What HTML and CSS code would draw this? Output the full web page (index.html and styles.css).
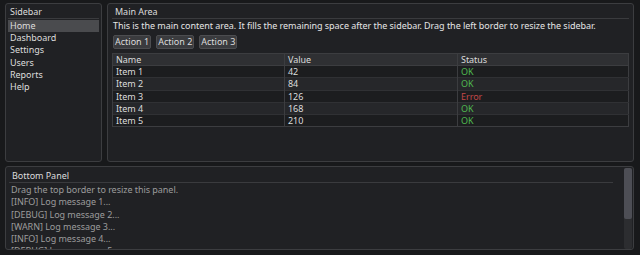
FILE: index.html
```html
<!DOCTYPE html>
<html>
<head>
<meta charset="utf-8">
<link rel="stylesheet" href="styles.css">
</head>
<body>
<div class="app">
  <div class="top">
    <aside class="panel sidebar">
      <div class="title">Sidebar</div>
      <ul class="nav">
        <li class="active">Home</li>
        <li>Dashboard</li>
        <li>Settings</li>
        <li>Users</li>
        <li>Reports</li>
        <li>Help</li>
      </ul>
    </aside>
    <main class="panel main">
      <div class="title">Main Area</div>
      <p class="desc">This is the main content area. It fills the remaining space after the sidebar. Drag the left border to resize the sidebar.</p>
      <div class="actions">
        <button>Action 1</button>
        <button>Action 2</button>
        <button>Action 3</button>
      </div>
      <table class="grid">
        <thead>
          <tr><th>Name</th><th>Value</th><th>Status</th></tr>
        </thead>
        <tbody>
          <tr><td>Item 1</td><td>42</td><td class="ok">OK</td></tr>
          <tr><td>Item 2</td><td>84</td><td class="ok">OK</td></tr>
          <tr><td>Item 3</td><td>126</td><td class="err">Error</td></tr>
          <tr><td>Item 4</td><td>168</td><td class="ok">OK</td></tr>
          <tr><td>Item 5</td><td>210</td><td class="ok">OK</td></tr>
        </tbody>
      </table>
    </main>
  </div>
  <section class="panel bottom">
    <div class="bottom-body">
      <div class="title">Bottom Panel</div>
      <div class="log">
        <div>Drag the top border to resize this panel.</div>
        <div>[INFO] Log message 1...</div>
        <div>[DEBUG] Log message 2...</div>
        <div>[WARN] Log message 3...</div>
        <div>[INFO] Log message 4...</div>
        <div>[DEBUG] Log message 5...</div>
      </div>
    </div>
    <div class="scrollbar"><div class="thumb"></div></div>
  </section>
</div>
</body>
</html>
```
FILE: styles.css
```css
* { box-sizing: border-box; }
html, body {
  margin: 0;
  padding: 0;
  background: #18191b;
  width: 640px;
  height: 255px;
  overflow: hidden;
}
body {
  font-family: "Noto Sans", "Open Sans", sans-serif;
  font-size: 9px;
  letter-spacing: -0.04px;
  color: #dcdcdc;
  line-height: 12px;
}
.app {
  display: flex;
  flex-direction: column;
  gap: 4px;
  padding: 3px 6px 5px 5px;
  height: 255px;
}
.top {
  display: flex;
  gap: 5px;
  height: 159px;
}
.panel {
  background: #202124;
  border: 1px solid #3c3d40;
  border-radius: 3px;
}
.title {
  padding: 1px 3px 0 3px;
  height: 15px;
  border-bottom: 1px solid #3a3b3e;
  line-height: 13px;
}
.sidebar {
  width: 97px;
  padding: 0 2px;
}
.sidebar .title { padding-left: 2px; }
.nav {
  list-style: none;
  margin: 0;
  padding: 1px 0 0 0;
}
.nav li {
  height: 12.2px;
  line-height: 12px;
  padding-left: 2px;
}
.nav li.active { background: #4a4b4e; }
.main {
  flex: 1;
  padding: 0 4px;
}
.desc {
  margin: 0;
  padding: 1px 1px 0;
  color: #e4e4e4;
  height: 15px;
  white-space: nowrap;
}
.actions {
  display: flex;
  gap: 5px;
  padding: 1px 1px 0;
  height: 20px;
}
button {
  font: inherit;
  color: #dcdcdc;
  background: #3a3b3e;
  border: 1px solid #4c4d50;
  border-radius: 2px;
  height: 14px;
  line-height: 12px;
  padding: 0 1px;
}
.grid {
  width: 100%;
  border-collapse: collapse;
  border: 1px solid #3c3d40;
  margin-top: -1px;
}
.grid th, .grid td {
  text-align: left;
  font-weight: normal;
  padding: 0 3px;
  height: 12.2px;
  line-height: 11px;
  border-left: 1px solid #3c3d40;
}
.grid th { background: #2f3033; border-bottom: 1px solid #3c3d40; }
.grid th:nth-child(1), .grid td:nth-child(1) { width: 172px; }
.grid th:nth-child(2), .grid td:nth-child(2) { width: 173px; }
.grid tbody tr:nth-child(odd) { background: #1c1d1f; }
.grid tbody tr:nth-child(even) { background: #26272a; }
.grid tbody tr { border-top: 1px solid #303134; }
.ok { color: #4fb84f; }
.err { color: #c04848; }
.bottom {
  flex: 1;
  display: flex;
  overflow: hidden;
  padding: 0 0 0 3px;
}
.bottom-body {
  flex: 1;
  overflow: hidden;
}
.bottom .title { padding-top: 2px; height: 16px; margin-right: 9px; }
.log {
  color: #9c9c9c;
  padding: 1px 2px 0;
}
.log div { height: 12.3px; line-height: 12px; }
.scrollbar {
  width: 8px;
  margin: 1px 1px 0 2px;
  background: #2c2d30;
  border-radius: 2px;
}
.thumb {
  height: 51px;
  background: #4d4e55;
  border-radius: 2px;
}
```
